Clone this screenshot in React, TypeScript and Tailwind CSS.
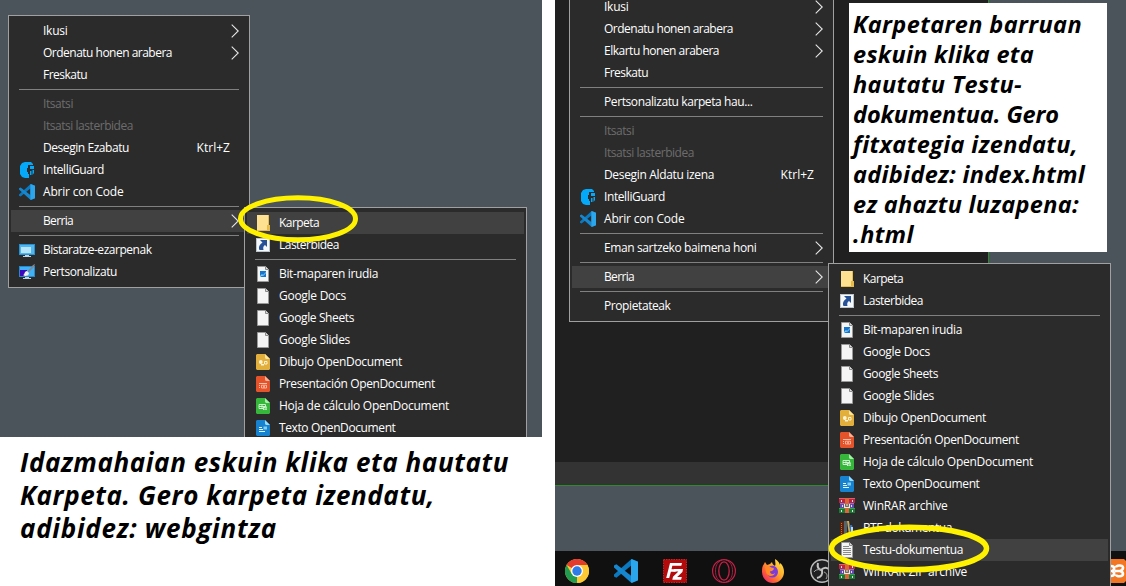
import { Fragment, useLayoutEffect, useRef, useState } from "react";
import type { ReactNode } from "react";

/* Text whose tracking is adjusted so that it spans a given width. */
function Fit({ text, width }: { text: string; width: number }) {
  const ref = useRef<HTMLSpanElement>(null);
  const [spacing, setSpacing] = useState(0);
  useLayoutEffect(() => {
    if (ref.current) {
      const natural = ref.current.getBoundingClientRect().width;
      setSpacing((width - natural) / text.length);
    }
  }, [text, width]);
  return (
    <span ref={ref} className="inline-block whitespace-pre" style={{ letterSpacing: `${spacing}px` }}>
      {text}
    </span>
  );
}

const VsCode = ({ className = "size-4" }: { className?: string }) => (
  <svg viewBox="0 0 24 24" className={className}>
    <path d="M17.5 0 24 2.8v18.4L17.5 24l-.5-7.500V6.700L2.400 18.800 0 17.600v-2z" fill="#0b79c0" />
    <path d="M0 6.500 2.400 5.200 17.500 17v7L0 8.400z" fill="#1687cf" />
    <path d="M17.500 0 24 2.800v18.400L17.500 24l-.5-1.500V1.500z" fill="#2ba5ec" />
  </svg>
);

const Guard = () => (
  <svg viewBox="0 0 16 16" className="size-4">
    <path d="M6 0h4v3H9v3H8v4h1v2h1v4H6l-3-1-2-3V4l2-3z" fill="#05a9f9" />
    <path d="M10 0h2l2 2v1h-4zM11 4h4v3h-4zM11 9h1.500v4H11zM13.500 8H15v3l-1.500 2z" fill="#05a9f9" />
  </svg>
);

const Display = () => (
  <svg viewBox="0 0 16 16" className="size-4">
    <rect y="2" width="16" height="11" fill="#2592d5" />
    <rect x="1" y="3" width="14" height="9" fill="#52b5ec" />
    <path d="M2 5h10v6H2z" fill="#b7e5fc" />
    <path d="M6 13h4v1H6zM4 14h8v1H4z" fill="#c8d4dc" />
  </svg>
);

const Personalize = () => (
  <svg viewBox="0 0 16 16" className="size-4">
    <rect y="2" width="16" height="11" fill="#2789cc" />
    <rect x="1" y="3" width="14" height="9" fill="#41b1f5" />
    <path d="M1 6h7v6H1z" fill="#3b09bd" />
    <path d="M8 8 14 1l2-1-1 3-6 6z" fill="#7d8992" />
    <path d="M4 11c2 0 1-4 4-4l2 2c0 3-4 4-6 2z" fill="#eef3f7" />
    <path d="M6 13h4v1h2v1H4v-1h2z" fill="#c8d4dc" />
  </svg>
);

const Folder = () => (
  <svg viewBox="0 0 16 16" className="size-4">
    <path d="M2 0h12v10h1v6H2z" fill="#e9bd4d" />
    <path d="M2 0h11v15H2z" fill="#ffe291" />
    <path d="M12 10h1v5h-1z" fill="#e7b943" />
  </svg>
);

const Shortcut = () => (
  <svg viewBox="0 0 16 16" className="size-4">
    <rect x="1.5" y="1.5" width="13" height="13" fill="#f6f9fc" stroke="#bfc5cd" />
    <path d="M5 3h7v7l-2-2c-2 1-2 3-1.500 5H4.500C3 10 5 7 7.500 5.500z" fill="#285298" />
  </svg>
);

const Page = ({ children }: { children?: ReactNode }) => (
  <svg viewBox="0 0 16 16" className="size-4">
    <path d="M2.500.5h8l3 3v12h-11z" fill="#f5f5f5" stroke="#999" />
    <path d="M10.500.5v3h3" fill="#ddd" stroke="#8b8b8b" />
    {children}
  </svg>
);

const Bitmap = () => (
  <Page>
    <rect x="5" y="5" width="6" height="6" fill="#1675ca" />
    <path d="M5 10 7 8l1 1 3-3v1L8 10 7 9.500 5.500 11H5z" fill="#8bd2f5" />
  </Page>
);

const TextPage = () => (
  <Page>
    <path d="M4 4.500h6M4 6.500h8M4 8.500h8M4 10.500h8M4 12.500h8" stroke="#8a8a8a" strokeWidth="1" />
  </Page>
);

function OpenDoc({ color, fold, children }: { color: string; fold: string; children: ReactNode }) {
  return (
    <svg viewBox="0 0 16 16" className="size-4">
      <path d="M2 0h8l5 5v10l-1 1H2l-1-1V1z" fill={color} />
      <path d="M10 0v4l1 1h4z" fill={fold} />
      {children}
    </svg>
  );
}

const Draw = () => (
  <OpenDoc color="#e2ae3c" fold="#ffe49a">
    <circle cx="5.800" cy="8" r="1.900" fill="#fff3d5" />
    <path d="M6 10h3v1.500H6z" fill="#fff3d5" />
    <path d="M9.500 7.500h2.500v2.500h-2.500z" fill="none" stroke="#fff3d5" />
  </OpenDoc>
);
const Slides = () => (
  <OpenDoc color="#e5532b" fold="#ffb293">
    <path d="M4 7.500h8M4 9.500h1M4 11.500h1" stroke="#ffd8c8" strokeWidth=".8" />
    <path d="M6.500 9.200h5v2.800h-5zM8 9.800l2 1.800M10 9.800l-2 1.800" fill="none" stroke="#ffd8c8" strokeWidth=".7" />
  </OpenDoc>
);
const Sheet = () => (
  <OpenDoc color="#36b63b" fold="#a8efa9">
    <path d="M4 6.500h6.500v4H4zM4 8.500h6.500M7 6.500v4" fill="none" stroke="#d9f8da" strokeWidth=".9" />
    <path d="M8 8.500h4v3.500H8z" fill="#c5efc6" />
    <path d="M9.500 10v1.500M11 9.500v2" stroke="#36b63b" strokeWidth=".7" />
  </OpenDoc>
);
const Writer = () => (
  <OpenDoc color="#1783d0" fold="#99dcff">
    <path d="M4 7.500h3M4 9.500h4M4 11.500h6" stroke="#e3f5ff" />
    <path d="M8.500 6.500H12v3H8.500z" fill="#83cdf7" />
  </OpenDoc>
);

const WinRar = () => (
  <svg viewBox="0 0 16 16" className="size-4">
    <path d="M0 0h16v5H0z" fill="#bd243d" />
    <path d="M0 0h16v1H0z" fill="#e45a69" />
    <path d="M0 5h1v5H0zM15 5h1v5h-1z" fill="#2b2b2b" />
    <path d="M1 5h14v5H1z" fill="#614bad" />
    <path d="M1 5h14v1H1z" fill="#8878d1" />
    <path d="M0 10h16v5H0z" fill="#167b35" />
    <path d="M0 10h16v1H0z" fill="#35a44d" />
    <path d="M2.500 2v2M3.500 7v2M2.500 12v2M13.500 2v2M12.500 7v2M13.500 12v2" stroke="#f0d7e0" />
    <path d="M6 0h4v15H6z" fill="#dc6437" />
    <path d="M5 6h6v4H5z" fill="#eee6df" />
    <path d="M6.500 6v2.500h3V6M8 6v2" stroke="#44321f" strokeWidth=".7" fill="none" />
  </svg>
);

const Rtf = () => (
  <svg viewBox="0 0 16 16" className="size-4">
    <path d="M1 2h4v13H1z" fill="#5a2413" />
    <path d="M2.500 3v11" stroke="#d46b23" strokeDasharray="1 1" />
    <path d="M5 1h3v14H5z" fill="#55646c" />
    <path d="M8 1h2l2 13-2 1z" fill="#d0ac56" />
    <path d="M10 5h3l2 9-3 1z" fill="#3971b4" />
    <path d="M12 7h2v5h-2z" fill="#b9d7f1" />
  </svg>
);

type Entry =
  | "line"
  | {
      label: string;
      w: number;
      icon?: ReactNode;
      arrow?: boolean;
      off?: boolean;
      active?: boolean;
      keys?: string;
    };

const newItems: Entry[] = [
  { label: "Karpeta", w: 40, icon: <Folder /> },
  { label: "Lasterbidea", w: 60, icon: <Shortcut /> },
  "line",
  { label: "Bit-maparen irudia", w: 99, icon: <Bitmap /> },
  { label: "Google Docs", w: 67, icon: <Page /> },
  { label: "Google Sheets", w: 75, icon: <Page /> },
  { label: "Google Slides", w: 71, icon: <Page /> },
  { label: "Dibujo OpenDocument", w: 123, icon: <Draw /> },
  { label: "Presentación OpenDocument", w: 156, icon: <Slides /> },
  { label: "Hoja de cálculo OpenDocument", w: 170, icon: <Sheet /> },
  { label: "Texto OpenDocument", w: 116.5, icon: <Writer /> },
];

const desktopMenu: Entry[] = [
  { label: "Ikusi", w: 24.5, arrow: true },
  { label: "Ordenatu honen arabera", w: 129, arrow: true },
  { label: "Freskatu", w: 44 },
  "line",
  { label: "Itsatsi", w: 30, off: true },
  { label: "Itsatsi lasterbidea", w: 90, off: true },
  { label: "Desegin Ezabatu", w: 86, keys: "Ktrl+Z" },
  { label: "IntelliGuard", w: 61, icon: <Guard /> },
  { label: "Abrir con Code", w: 80.5, icon: <VsCode /> },
  "line",
  { label: "Berria", w: 30, arrow: true, active: true },
  "line",
  { label: "Bistaratze-ezarpenak", w: 108.5, icon: <Display /> },
  { label: "Pertsonalizatu", w: 74, icon: <Personalize /> },
];

const folderMenu: Entry[] = [
  { label: "Ikusi", w: 24.5, arrow: true },
  { label: "Ordenatu honen arabera", w: 129, arrow: true },
  { label: "Elkartu honen arabera", w: 115, arrow: true },
  { label: "Freskatu", w: 44 },
  "line",
  { label: "Pertsonalizatu karpeta hau...", w: 148.5 },
  "line",
  { label: "Itsatsi", w: 30, off: true },
  { label: "Itsatsi lasterbidea", w: 90, off: true },
  { label: "Desegin Aldatu izena", w: 110, keys: "Ktrl+Z" },
  { label: "IntelliGuard", w: 61, icon: <Guard /> },
  { label: "Abrir con Code", w: 80.5, icon: <VsCode /> },
  "line",
  { label: "Eman sartzeko baimena honi", w: 152.5, arrow: true },
  "line",
  { label: "Berria", w: 30, arrow: true, active: true },
  "line",
  { label: "Propietateak", w: 66.5 },
];

const desktopNew: Entry[] = newItems.map((e, i) => (i === 0 && e !== "line" ? { ...e, active: true } : e));

const folderNew: Entry[] = [
  ...newItems,
  { label: "WinRAR archive", w: 84.5, icon: <WinRar /> },
  { label: "RTF dokumentua", w: 89, icon: <Rtf /> },
  { label: "Testu-dokumentua", w: 100, icon: <TextPage />, active: true },
  { label: "WinRAR ZIP archive", w: 104, icon: <WinRar /> },
];

function Menu({ entries, className }: { entries: Entry[]; className: string }) {
  return (
    <div className={`absolute flex flex-col border border-[#a0a0a0] bg-[#2b2b2b] px-[2px] pt-1 pb-1 font-['Open_Sans','Noto_Sans',sans-serif] text-[12px] text-white ${className}`}>
      {entries.map((e, i) => (
        <Fragment key={i}>
          {e === "line" ? (
            <div className="flex h-[7px] shrink-0 pt-[3px] pr-2 pl-2">
              <div className="h-px grow bg-[#808080]" />
            </div>
          ) : (
            <div className={`flex h-[22px] shrink-0 items-center pr-2 pl-2 ${e.active ? "bg-[#414141]" : ""} ${e.off ? "text-[#6d6d6d]" : ""}`}>
              <span className="mr-2 size-4 shrink-0">{e.icon}</span>
              <span className="grow leading-[22px]">
                <Fit text={e.label} width={e.w} />
              </span>
              {e.keys && (
                <span className="mr-[9px] leading-[22px]">
                  <Fit text={e.keys} width={33.5} />
                </span>
              )}
              {e.arrow && (
                <svg viewBox="0 0 8 14" className="h-[14px] w-2" fill="none" stroke="#e6e6e6" strokeWidth="1.100">
                  <path d="M.7.7 7.200 7 .7 13.300" />
                </svg>
              )}
            </div>
          )}
        </Fragment>
      ))}
    </div>
  );
}

const deskNote: [string, number][] = [
  ["Idazmahaian eskuin klika eta hautatu", 489],
  ["Karpeta. Gero karpeta izendatu,", 415],
  ["adibidez: webgintza", 257],
];

const folderNote: [string, number][] = [
  ["Karpetaren barruan", 229],
  ["eskuin klika eta", 181],
  ["hautatu Testu-", 169],
  ["dokumentua. Gero", 206],
  ["fitxategia izendatu,", 225],
  ["adibidez: index.html", 232],
  ["ez ahaztu luzapena:", 226],
  [".html", 61],
];

const Chrome = () => (
  <svg viewBox="0 0 24 24" className="size-6">
    <circle cx="12" cy="12" r="12" fill="#fcc934" />
    <path d="M12 12 1.600 6a12 12 0 0 1 20.800 0z" fill="#e33b2e" />
    <path d="M12 12 12 24A12 12 0 0 1 1.600 6L6.800 15z" fill="#219c50" />
    <path d="M12 24 17.200 15 12 6h10.400A12 12 0 0 1 12 24z" fill="#fcc934" />
    <circle cx="12" cy="12" r="6" fill="#fff" />
    <circle cx="12" cy="12" r="4.700" fill="#2d7ce8" />
  </svg>
);

const FileZilla = () => (
  <svg viewBox="0 0 24 24" className="size-6">
    <rect x=".5" y=".5" width="23" height="23" fill="#b30b0b" stroke="#c32525" strokeDasharray="1.500 1" />
    <path d="M7 4h12l-.7 2.800H9.300l-.8 3.400h4.700l-.7 2.600H7.900L6.200 19H3.200z" fill="#fff" />
    <path d="M11 10h9l-.6 3-5.200 5h4.600l-.7 2.700H9.300l.7-3 5.400-5.200h-5z" fill="#fff" />
  </svg>
);

const Opera = () => (
  <svg viewBox="0 0 24 24" className="size-6" fill="none" stroke="#c62147">
    <circle cx="12" cy="12" r="11.400" strokeWidth="1.200" />
    <ellipse cx="12" cy="12" rx="5.200" ry="9.200" strokeWidth="1.300" />
    <path d="M10 1C4.500 3 3.500 8 3.500 12S4.500 21 10 23M14 1c5.500 2 6.500 7 6.500 11S19.500 21 14 23" strokeWidth=".8" />
  </svg>
);

const Firefox = () => (
  <svg viewBox="0 0 24 24" className="size-6">
    <defs>
      <linearGradient id="fox" x1="1" y1="0" x2="0" y2="1">
        <stop offset="0" stopColor="#fff24a" />
        <stop offset=".4" stopColor="#ffad2d" />
        <stop offset=".7" stopColor="#ff5a36" />
        <stop offset="1" stopColor="#e5158d" />
      </linearGradient>
    </defs>
    <path d="M3 5 4 3l2 3 3-1 2-2c0 2 2 3 3 4 1-2 0-4 0-7 3 2 4 3 5 6V4c3 2 4 6 4 9a11 11 0 0 1-22 0c0-3 0-6 2-8z" fill="url(#fox)" />
    <path d="M8 8c4-3 9 0 9 5a5.500 5.500 0 0 1-11 0l5-1 2-2z" fill="#7c3cdc" />
    <path d="M4 8c3-2 5 1 9 1-1 2-4 2-4 4 1 3 4 2 5 1-1 4-8 4-9-1z" fill="#ff8a25" />
  </svg>
);

const Obs = () => (
  <svg viewBox="0 0 24 24" className="size-6 shrink-0">
    <circle cx="12" cy="12" r="11.200" fill="#201f22" stroke="#b9b9b9" strokeWidth="1.400" />
    <path d="M8 4c-1 4 0 6 3 7 3-3 6-3 9 0M12 11c1 5-1 7-5 8" fill="none" stroke="#c2c2c2" strokeWidth="2" />
    <path d="M11 11c-3-1-6 0-7 2M14 13c3 1 4 4 2 7" fill="none" stroke="#a8a8a8" strokeWidth="1" />
  </svg>
);

/* Only the right part of the tile shows beside the menu. */
const Xampp = () => (
  <svg viewBox="0 0 16 24" className="h-6 w-4">
    <path d="M0 0h14l2 2v20l-2 2H0z" fill="#f37623" />
    <path
      d="M0 7h1c4 0 4 4 1 5 3 1 3 5-1 5H0M6 8.500c0-2.500 7-3 7 0 0 2-1 3-3 3.500 2 .5 3 1.500 3 3 0 3-7 3-7 .5M5 12h5"
      fill="none"
      stroke="#fff"
      strokeWidth="2.600"
      strokeLinejoin="round"
    />
  </svg>
);

export default function App() {
  return (
    <div className="flex h-[586px] w-[1126px] gap-[13px] overflow-hidden bg-white">
      <section className="flex w-[542px] flex-col">
        <div className="relative h-[437px] overflow-hidden bg-[#4b545a]">
          <Menu entries={desktopMenu} className="top-[15px] left-2 w-[242px]" />
          <Menu entries={desktopNew} className="top-[207px] left-[244px] w-[283px]" />
          <svg className="absolute top-[194px] left-[237px] h-[50px] w-[122px]" viewBox="0 0 122 50">
            <ellipse cx="61" cy="24.700" rx="57.500" ry="21" fill="none" stroke="#fff200" strokeWidth="5" />
          </svg>
        </div>
        <div className="flex flex-col pt-[9px] pl-5 font-['Open_Sans','Noto_Sans',sans-serif] text-[26px] leading-[33px] font-bold text-black italic">
          {deskNote.map(([t, w]) => (
            <div key={t} className="h-[33px]">
              <Fit text={t} width={w} />
            </div>
          ))}
        </div>
      </section>

      <section className="relative flex w-[571px] flex-col overflow-hidden bg-[#4b545a]">
        <div className="flex h-[486px] w-[434px] flex-col justify-end border-r border-b border-[#2f8a2f] bg-[#202020]">
          <div className="h-[23px] bg-[#333333]" />
        </div>
        <div className="grow" />
        <footer className="flex h-[35px] items-center justify-between bg-[#101010] pt-[5px] pl-[10px]">
          <div className="flex gap-[25px]">
            <Chrome />
            <VsCode className="size-6" />
            <FileZilla />
            <Opera />
            <Firefox />
            <Obs />
          </div>
          <Xampp />
        </footer>

        <div className="absolute top-[3px] left-[294px] flex h-[249px] w-[258px] flex-col bg-white pt-[6px] pl-1 font-['Open_Sans','Noto_Sans',sans-serif] text-[23.5px] leading-[30px] font-bold text-black italic">
          {folderNote.map(([t, w]) => (
            <div key={t} className="h-[30px]">
              <Fit text={t} width={w} />
            </div>
          ))}
        </div>
        <Menu entries={folderMenu} className="-top-[9px] left-[14px] w-[265px]" />
        <Menu entries={folderNew} className="top-[263px] left-[273px] h-[360px] w-[283px]" />
        <svg className="absolute top-[523px] left-[272px] h-[51px] w-[164px]" viewBox="0 0 164 51">
          <ellipse cx="82" cy="25.500" rx="77.500" ry="21.200" fill="none" stroke="#fff200" strokeWidth="5.500" />
        </svg>
      </section>
    </div>
  );
}
